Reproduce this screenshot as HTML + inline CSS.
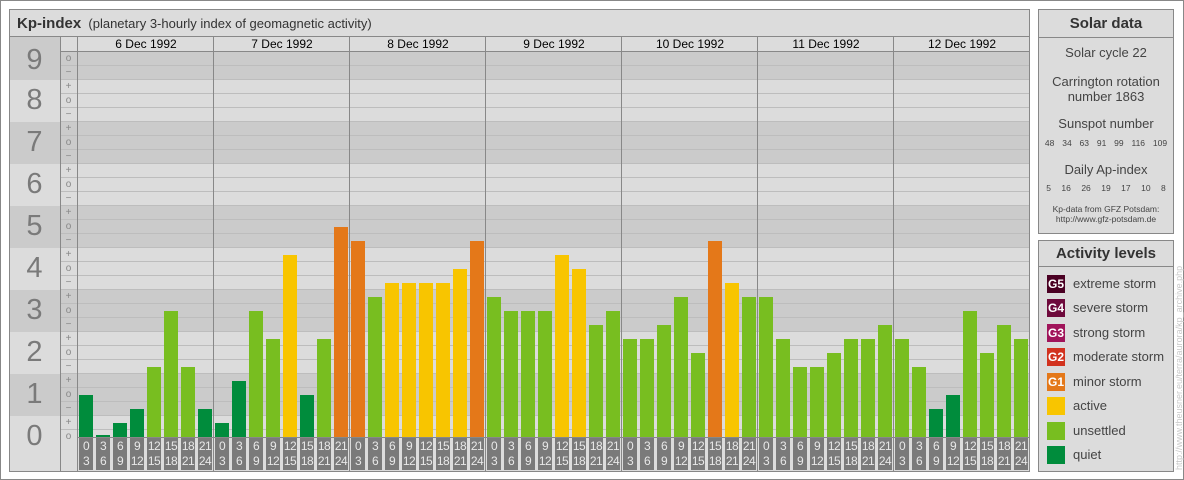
<!DOCTYPE html>
<html><head><meta charset="utf-8"><style>
*{margin:0;padding:0;box-sizing:border-box}
body{width:1184px;height:480px;background:#fff;position:relative;overflow:hidden;font-family:"Liberation Sans",sans-serif}
.a{position:absolute}
.bd{position:absolute;left:9px;width:1020px}
.dk{background:#cbcbcb}.lt{background:#dcdcdc}
.num{position:absolute;left:9px;width:51px;text-align:center;font-size:29px;color:#7a7a7a}
.tk{position:absolute;left:60px;width:17px;text-align:center;font-size:10px;color:#888;line-height:10px}
.vl{position:absolute;top:37px;width:1px;height:435px;background:#888}
.dt{position:absolute;top:37px;width:136px;text-align:center;font-size:12px;line-height:15px;color:#000}
.b{position:absolute;width:14px;bottom:43px}
.q{background:#008c3c}.u{background:#78be20}.y{background:#f8c500}.m{background:#e47819}
.lb{position:absolute;top:438px;width:14px;height:32px;background:#7a7a7a;color:#e8e8e8;font-size:12px;line-height:15px;text-align:center;letter-spacing:-0.6px;padding-top:1px;white-space:nowrap;overflow:hidden}
.box{position:absolute;left:1038px;width:136px;background:#dcdcdc;border:1px solid #888}
.hd{height:28px;border-bottom:1px solid #888;font-weight:bold;font-size:15px;text-align:center;line-height:27px;color:#333}
.c{text-align:center;color:#444;font-size:13px;position:absolute;left:0;width:134px}
.sm{font-size:8.5px;color:#444;position:absolute;left:0;width:134px;display:flex;justify-content:space-around;padding:0 2px}
.it{position:absolute;left:8px;font-size:13px;color:#444;line-height:18px}
.sw{display:inline-block;width:18px;height:18px;vertical-align:top;margin-right:8px;color:#fff;font-size:12px;font-weight:bold;text-align:center;line-height:18px}
</style></head><body>
<div class="a" style="left:0;top:0;width:1184px;height:480px;border:1px solid #888"></div>
<div class="a" style="left:9px;top:9px;width:1021px;height:463px;border:1px solid #888;background:#dcdcdc"></div>
<div class="a" style="left:10px;top:10px;width:1019px;height:27px;border-bottom:1px solid #888;font-size:13px;line-height:27px;padding-left:7px;color:#333"><b style="font-size:15px">Kp-index</b>&nbsp;&nbsp;(planetary 3-hourly index of geomagnetic activity)</div>
<div class="bd dk" style="top:37px;height:43px;left:10px;width:1019px"></div>
<div class="bd dk" style="top:122px;height:42px;left:10px;width:1019px"></div>
<div class="bd dk" style="top:206px;height:42px;left:10px;width:1019px"></div>
<div class="bd dk" style="top:290px;height:42px;left:10px;width:1019px"></div>
<div class="bd dk" style="top:374px;height:42px;left:10px;width:1019px"></div>
<div class="a" style="left:78px;top:37px;width:951px;height:14px;background:#dcdcdc"></div>
<div class="a" style="left:60px;top:37px;width:18px;height:14px;background:#dcdcdc"></div>
<div class="a" style="left:60px;top:51px;width:969px;height:386px;background:repeating-linear-gradient(to top,transparent 0,transparent 7px,#bdbdbd 7px,#bdbdbd 8px,transparent 8px,transparent 14px)"></div>
<div class="num" style="top:44px">9</div>
<div class="num" style="top:84px">8</div>
<div class="num" style="top:126px">7</div>
<div class="num" style="top:168px">6</div>
<div class="num" style="top:210px">5</div>
<div class="num" style="top:252px">4</div>
<div class="num" style="top:294px">3</div>
<div class="num" style="top:336px">2</div>
<div class="num" style="top:378px">1</div>
<div class="num" style="top:420px">0</div>
<div class="tk" style="top:54px">o</div><div class="tk" style="top:68px">−</div>
<div class="tk" style="top:82px">+</div><div class="tk" style="top:96px">o</div><div class="tk" style="top:110px">−</div>
<div class="tk" style="top:124px">+</div><div class="tk" style="top:138px">o</div><div class="tk" style="top:152px">−</div>
<div class="tk" style="top:166px">+</div><div class="tk" style="top:180px">o</div><div class="tk" style="top:194px">−</div>
<div class="tk" style="top:208px">+</div><div class="tk" style="top:222px">o</div><div class="tk" style="top:236px">−</div>
<div class="tk" style="top:250px">+</div><div class="tk" style="top:264px">o</div><div class="tk" style="top:278px">−</div>
<div class="tk" style="top:292px">+</div><div class="tk" style="top:306px">o</div><div class="tk" style="top:320px">−</div>
<div class="tk" style="top:334px">+</div><div class="tk" style="top:348px">o</div><div class="tk" style="top:362px">−</div>
<div class="tk" style="top:376px">+</div><div class="tk" style="top:390px">o</div><div class="tk" style="top:404px">−</div>
<div class="tk" style="top:418px">+</div><div class="tk" style="top:432px">o</div>
<div class="vl" style="left:60px"></div><div class="vl" style="left:77px"></div>
<div class="vl" style="left:213px"></div><div class="vl" style="left:349px"></div><div class="vl" style="left:485px"></div><div class="vl" style="left:621px"></div><div class="vl" style="left:757px"></div><div class="vl" style="left:893px"></div>
<div class="a" style="left:60px;top:51px;width:969px;height:1px;background:#888"></div>
<div class="a" style="left:77px;top:437px;width:952px;height:1px;background:#888"></div>
<div class="dt" style="left:78px">6 Dec 1992</div><div class="dt" style="left:214px">7 Dec 1992</div><div class="dt" style="left:350px">8 Dec 1992</div><div class="dt" style="left:486px">9 Dec 1992</div><div class="dt" style="left:622px">10 Dec 1992</div><div class="dt" style="left:758px">11 Dec 1992</div><div class="dt" style="left:894px">12 Dec 1992</div>

<div class="b q" style="left:79px;height:42px"></div><div class="b q" style="left:96px;height:2px"></div><div class="b q" style="left:113px;height:14px"></div><div class="b q" style="left:130px;height:28px"></div><div class="b u" style="left:147px;height:70px"></div><div class="b u" style="left:164px;height:126px"></div><div class="b u" style="left:181px;height:70px"></div><div class="b q" style="left:198px;height:28px"></div>
<div class="b q" style="left:215px;height:14px"></div><div class="b q" style="left:232px;height:56px"></div><div class="b u" style="left:249px;height:126px"></div><div class="b u" style="left:266px;height:98px"></div><div class="b y" style="left:283px;height:182px"></div><div class="b q" style="left:300px;height:42px"></div><div class="b u" style="left:317px;height:98px"></div><div class="b m" style="left:334px;height:210px"></div>
<div class="b m" style="left:351px;height:196px"></div><div class="b u" style="left:368px;height:140px"></div><div class="b y" style="left:385px;height:154px"></div><div class="b y" style="left:402px;height:154px"></div><div class="b y" style="left:419px;height:154px"></div><div class="b y" style="left:436px;height:154px"></div><div class="b y" style="left:453px;height:168px"></div><div class="b m" style="left:470px;height:196px"></div>
<div class="b u" style="left:487px;height:140px"></div><div class="b u" style="left:504px;height:126px"></div><div class="b u" style="left:521px;height:126px"></div><div class="b u" style="left:538px;height:126px"></div><div class="b y" style="left:555px;height:182px"></div><div class="b y" style="left:572px;height:168px"></div><div class="b u" style="left:589px;height:112px"></div><div class="b u" style="left:606px;height:126px"></div>
<div class="b u" style="left:623px;height:98px"></div><div class="b u" style="left:640px;height:98px"></div><div class="b u" style="left:657px;height:112px"></div><div class="b u" style="left:674px;height:140px"></div><div class="b u" style="left:691px;height:84px"></div><div class="b m" style="left:708px;height:196px"></div><div class="b y" style="left:725px;height:154px"></div><div class="b u" style="left:742px;height:140px"></div>
<div class="b u" style="left:759px;height:140px"></div><div class="b u" style="left:776px;height:98px"></div><div class="b u" style="left:793px;height:70px"></div><div class="b u" style="left:810px;height:70px"></div><div class="b u" style="left:827px;height:84px"></div><div class="b u" style="left:844px;height:98px"></div><div class="b u" style="left:861px;height:98px"></div><div class="b u" style="left:878px;height:112px"></div>
<div class="b u" style="left:895px;height:98px"></div><div class="b u" style="left:912px;height:70px"></div><div class="b q" style="left:929px;height:28px"></div><div class="b q" style="left:946px;height:42px"></div><div class="b u" style="left:963px;height:126px"></div><div class="b u" style="left:980px;height:84px"></div><div class="b u" style="left:997px;height:112px"></div><div class="b u" style="left:1014px;height:98px"></div>

<div class="lb" style="left:79px">0<br>3</div><div class="lb" style="left:96px">3<br>6</div><div class="lb" style="left:113px">6<br>9</div><div class="lb" style="left:130px">9<br>12</div><div class="lb" style="left:147px">12<br>15</div><div class="lb" style="left:164px">15<br>18</div><div class="lb" style="left:181px">18<br>21</div><div class="lb" style="left:198px">21<br>24</div>
<div class="lb" style="left:215px">0<br>3</div><div class="lb" style="left:232px">3<br>6</div><div class="lb" style="left:249px">6<br>9</div><div class="lb" style="left:266px">9<br>12</div><div class="lb" style="left:283px">12<br>15</div><div class="lb" style="left:300px">15<br>18</div><div class="lb" style="left:317px">18<br>21</div><div class="lb" style="left:334px">21<br>24</div>
<div class="lb" style="left:351px">0<br>3</div><div class="lb" style="left:368px">3<br>6</div><div class="lb" style="left:385px">6<br>9</div><div class="lb" style="left:402px">9<br>12</div><div class="lb" style="left:419px">12<br>15</div><div class="lb" style="left:436px">15<br>18</div><div class="lb" style="left:453px">18<br>21</div><div class="lb" style="left:470px">21<br>24</div>
<div class="lb" style="left:487px">0<br>3</div><div class="lb" style="left:504px">3<br>6</div><div class="lb" style="left:521px">6<br>9</div><div class="lb" style="left:538px">9<br>12</div><div class="lb" style="left:555px">12<br>15</div><div class="lb" style="left:572px">15<br>18</div><div class="lb" style="left:589px">18<br>21</div><div class="lb" style="left:606px">21<br>24</div>
<div class="lb" style="left:623px">0<br>3</div><div class="lb" style="left:640px">3<br>6</div><div class="lb" style="left:657px">6<br>9</div><div class="lb" style="left:674px">9<br>12</div><div class="lb" style="left:691px">12<br>15</div><div class="lb" style="left:708px">15<br>18</div><div class="lb" style="left:725px">18<br>21</div><div class="lb" style="left:742px">21<br>24</div>
<div class="lb" style="left:759px">0<br>3</div><div class="lb" style="left:776px">3<br>6</div><div class="lb" style="left:793px">6<br>9</div><div class="lb" style="left:810px">9<br>12</div><div class="lb" style="left:827px">12<br>15</div><div class="lb" style="left:844px">15<br>18</div><div class="lb" style="left:861px">18<br>21</div><div class="lb" style="left:878px">21<br>24</div>
<div class="lb" style="left:895px">0<br>3</div><div class="lb" style="left:912px">3<br>6</div><div class="lb" style="left:929px">6<br>9</div><div class="lb" style="left:946px">9<br>12</div><div class="lb" style="left:963px">12<br>15</div><div class="lb" style="left:980px">15<br>18</div><div class="lb" style="left:997px">18<br>21</div><div class="lb" style="left:1014px">21<br>24</div>

<div class="box" style="top:9px;height:225px">
<div class="hd">Solar data</div>
<div class="c" style="top:35px">Solar cycle 22</div>
<div class="c" style="top:64px;line-height:15px">Carrington rotation<br>number 1863</div>
<div class="c" style="top:106px">Sunspot number</div>
<div class="sm" style="top:128px"><span>48</span><span>34</span><span>63</span><span>91</span><span>99</span><span>116</span><span>109</span></div>
<div class="c" style="top:152px">Daily Ap-index</div>
<div class="sm" style="top:173px"><span>5</span><span>16</span><span>26</span><span>19</span><span>17</span><span>10</span><span>8</span></div>
<div class="c" style="top:194px;font-size:8.5px;line-height:10px">Kp-data from GFZ Potsdam:<br>http://www.gfz-potsdam.de</div>
</div>
<div class="box" style="top:240px;height:232px">
<div class="hd" style="height:26px;line-height:26px">Activity levels</div>
<div class="it" style="top:34px"><span class="sw" style="background:#4a0023">G5</span>extreme storm</div>
<div class="it" style="top:58px"><span class="sw" style="background:#6e0a3c">G4</span>severe storm</div>
<div class="it" style="top:83px"><span class="sw" style="background:#a0145a">G3</span>strong storm</div>
<div class="it" style="top:107px"><span class="sw" style="background:#d2321e">G2</span>moderate storm</div>
<div class="it" style="top:132px"><span class="sw" style="background:#e47819">G1</span>minor storm</div>
<div class="it" style="top:156px"><span class="sw" style="background:#f8c500"></span>active</div>
<div class="it" style="top:181px"><span class="sw" style="background:#78be20"></span>unsettled</div>
<div class="it" style="top:205px"><span class="sw" style="background:#008c3c"></span>quiet</div>
</div>
<div class="a" style="left:1173px;top:470px;width:240px;transform-origin:0 0;transform:rotate(-90deg);font-size:9px;color:#c8c8c8;white-space:nowrap;line-height:12px">http://www.theusner.eu/terra/aurora/kp_archive.php</div>
</body></html>
